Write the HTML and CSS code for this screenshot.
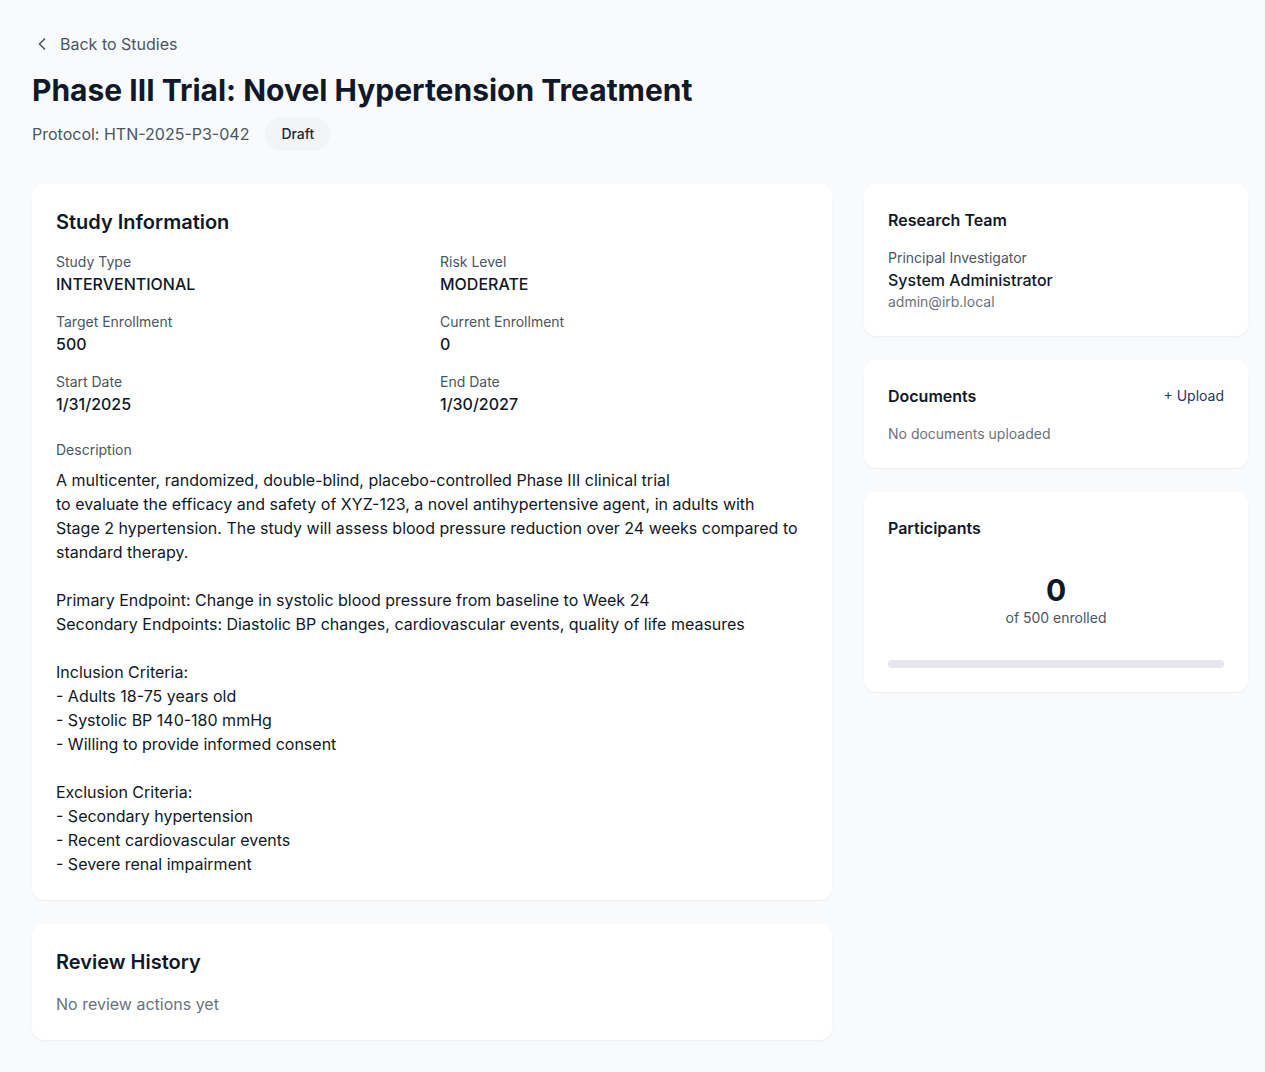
FILE: index.html
```html
<!DOCTYPE html>
<html lang="en">
<head>
<meta charset="utf-8">
<title>Phase III Trial: Novel Hypertension Treatment</title>
<link rel="stylesheet" href="styles.css">
</head>
<body>
<div class="page">
  <a class="back" href="#">
    <svg class="back-icon" width="20" height="20" viewBox="0 0 24 24" fill="none" stroke="currentColor" stroke-width="2" stroke-linecap="round" stroke-linejoin="round"><path d="M15 18l-6-6 6-6"/></svg>
    <span>Back to Studies</span>
  </a>
  <h1 class="title">Phase III Trial: Novel Hypertension Treatment</h1>
  <div class="meta">
    <span class="protocol">Protocol: HTN-2025-P3-042</span>
    <span class="badge">Draft</span>
  </div>

  <div class="layout">
    <div class="main">
      <section class="card">
        <h2 class="card-title">Study Information</h2>
        <div class="fields">
          <div class="field"><div class="label">Study Type</div><div class="value">INTERVENTIONAL</div></div>
          <div class="field"><div class="label">Risk Level</div><div class="value">MODERATE</div></div>
          <div class="field"><div class="label">Target Enrollment</div><div class="value">500</div></div>
          <div class="field"><div class="label">Current Enrollment</div><div class="value">0</div></div>
          <div class="field"><div class="label">Start Date</div><div class="value">1/31/2025</div></div>
          <div class="field"><div class="label">End Date</div><div class="value">1/30/2027</div></div>
        </div>
        <div class="desc">
          <div class="label">Description</div>
          <p class="desc-text">A multicenter, randomized, double-blind, placebo-controlled Phase III clinical trial
to evaluate the efficacy and safety of XYZ-123, a novel antihypertensive agent, in adults with
Stage 2 hypertension. The study will assess blood pressure reduction over 24 weeks compared to
standard therapy.

Primary Endpoint: Change in systolic blood pressure from baseline to Week 24
Secondary Endpoints: Diastolic BP changes, cardiovascular events, quality of life measures

Inclusion Criteria:
- Adults 18-75 years old
- Systolic BP 140-180 mmHg
- Willing to provide informed consent

Exclusion Criteria:
- Secondary hypertension
- Recent cardiovascular events
- Severe renal impairment</p>
        </div>
      </section>

      <section class="card">
        <h2 class="card-title">Review History</h2>
        <p class="empty">No review actions yet</p>
      </section>
    </div>

    <aside class="side">
      <section class="card">
        <h3 class="side-title">Research Team</h3>
        <div class="pi">
          <div class="label">Principal Investigator</div>
          <div class="value">System Administrator</div>
          <div class="email">admin@irb.local</div>
        </div>
      </section>

      <section class="card">
        <div class="card-head">
          <h3 class="side-title">Documents</h3>
          <a class="upload" href="#">+ Upload</a>
        </div>
        <p class="muted">No documents uploaded</p>
      </section>

      <section class="card">
        <h3 class="side-title">Participants</h3>
        <div class="count">
          <div class="count-num">0</div>
          <div class="count-sub">of 500 enrolled</div>
        </div>
        <div class="bar"><div class="bar-fill" style="width:0%"></div></div>
      </section>
    </aside>
  </div>
</div>
</body>
</html>
```

FILE: styles.css
```css
* { box-sizing: border-box; }
html, body { margin: 0; padding: 0; }
body {
  background: #f9fafb;
  font-family: Inter, "Noto Sans", sans-serif;
  color: #111827;
}
.page {
  width: 1216px;
  margin-left: 32px;
  padding: 32px 0 32px;
}
.back {
  display: flex;
  width: max-content;
  align-items: center;
  gap: 8px;
  height: 24px;
  color: #4b5563;
  text-decoration: none;
  font-size: 16px;
  line-height: 24px;
}
.back-icon { display: block; }
.title {
  margin: 16px 0 0;
  font-size: 30px;
  line-height: 36px;
  font-weight: 700;
  color: #111827;
}
.meta {
  margin-top: 9px;
  display: flex;
  align-items: center;
  gap: 16px;
  height: 34px;
}
.protocol {
  font-size: 16px;
  line-height: 24px;
  color: #4b5563;
}
.badge {
  display: inline-block;
  background: #f3f4f6;
  color: #1f2937;
  font-size: 14px;
  font-weight: 500;
  line-height: 20px;
  padding: 7px 16px;
  border-radius: 999px;
}
.layout {
  margin-top: 33px;
  display: grid;
  grid-template-columns: repeat(3, 1fr);
  column-gap: 32px;
  align-items: start;
}
.main {
  grid-column: span 2;
  display: flex;
  flex-direction: column;
  gap: 24px;
}
.side {
  display: flex;
  flex-direction: column;
  gap: 24px;
}
.card {
  background: #fff;
  border-radius: 12px;
  padding: 24px;
  box-shadow: 0 1px 2px rgba(0, 0, 0, 0.06);
}
.card-title {
  margin: 0;
  font-size: 20px;
  line-height: 28px;
  font-weight: 600;
  color: #111827;
}
.side-title {
  margin: 0;
  font-size: 16px;
  line-height: 24px;
  font-weight: 600;
  color: #111827;
}
.fields {
  margin-top: 16px;
  display: grid;
  grid-template-columns: 1fr 1fr;
  column-gap: 16px;
  row-gap: 16px;
}
.label {
  font-size: 14px;
  line-height: 20px;
  color: #4b5563;
}
.value {
  font-size: 16px;
  line-height: 24px;
  font-weight: 500;
  color: #111827;
}
.desc { margin-top: 24px; }
.desc-text {
  margin: 8px 0 0;
  white-space: pre-line;
  font-size: 16px;
  line-height: 24px;
  color: #111827;
}
.empty {
  margin: 16px 0 0;
  font-size: 16px;
  line-height: 24px;
  color: #6b7280;
}
.pi { margin-top: 16px; }
.email {
  font-size: 14px;
  line-height: 20px;
  color: #6b7280;
}
.card-head {
  display: flex;
  justify-content: space-between;
  align-items: center;
}
.upload {
  font-size: 14px;
  line-height: 20px;
  color: #1e3a5f;
  text-decoration: none;
  font-weight: 400;
}
.muted {
  margin: 16px 0 0;
  font-size: 14px;
  line-height: 20px;
  color: #6b7280;
}
.count {
  margin-top: 32px;
  text-align: center;
}
.count-num {
  font-size: 30px;
  line-height: 36px;
  font-weight: 700;
  color: #111827;
}
.count-sub {
  font-size: 14px;
  line-height: 20px;
  color: #4b5563;
}
.bar {
  margin-top: 32px;
  height: 8px;
  background: #e5e7eb;
  border-radius: 999px;
  overflow: hidden;
}
.bar-fill {
  height: 100%;
  background: #1e3a5f;
}
```
